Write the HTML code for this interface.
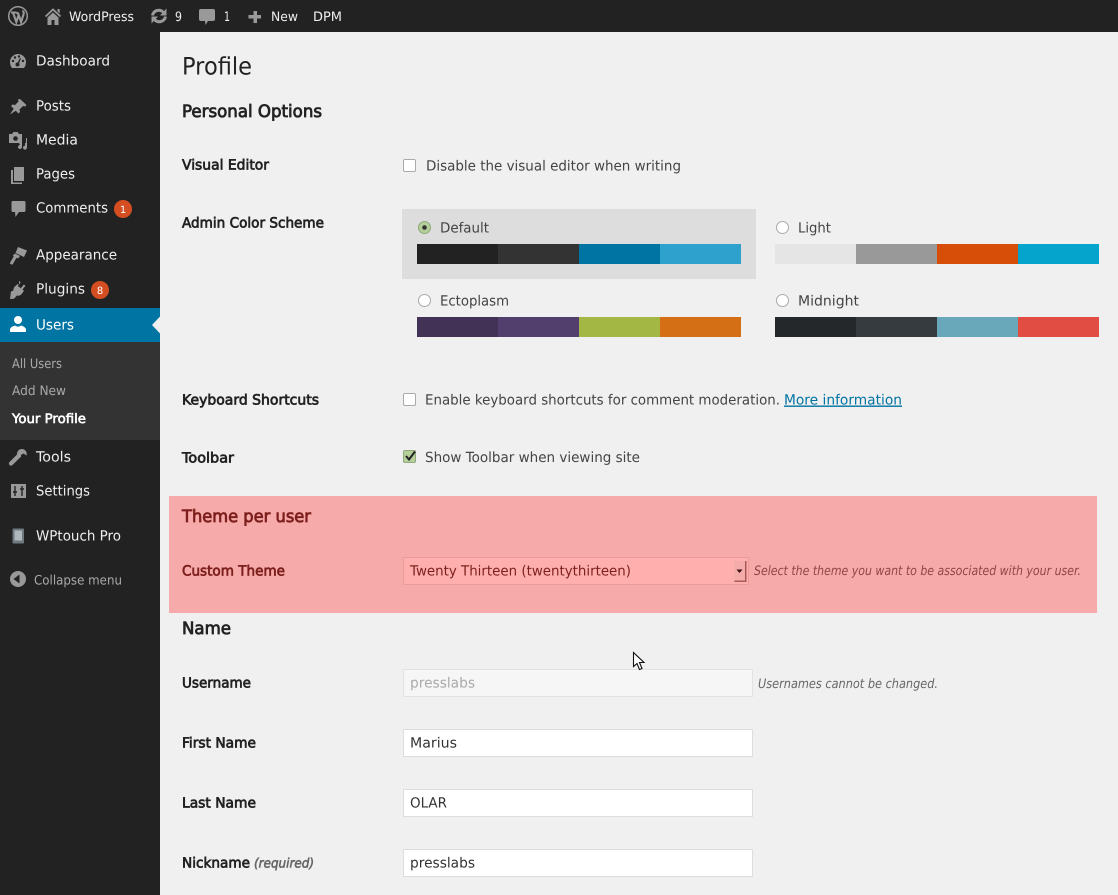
<!DOCTYPE html>
<html lang="en"><head><meta charset="utf-8"><title>Profile</title>
<style>
html,body{margin:0;padding:0;background:#f0f0f0;overflow:hidden}
svg{display:block}
text{font-family:"DejaVu Sans","Liberation Sans",sans-serif;text-rendering:geometricPrecision}
.m{font-size:14px;fill:#eee}
.t{font-size:13px;fill:#eee}
.s{font-size:13px;fill:#aaa}
.l{font-size:14px;fill:#222;stroke:#222;stroke-width:.7px}
.b{font-size:14px;fill:#444}
.h{font-size:17px;fill:#222;stroke:#222;stroke-width:.8px}
.i{fill:#999}
.n{font-size:13px;fill:#666;font-style:italic}
.r{fill:#7d1f1c;stroke:#7d1f1c}
</style></head><body>
<svg xmlns="http://www.w3.org/2000/svg" width="1118" height="895" viewBox="0 0 1118 895">
<rect width="1118" height="895" fill="#f0f0f0"/>
<rect width="160" height="895" fill="#222"/>
<rect width="1118" height="32" fill="#222"/>

<!-- admin bar icons -->
<g fill="none" stroke="#999">
<circle cx="18" cy="16" r="9.300" stroke-width="1.500"/>
<path d="M11 12.500h5.500M13 12.500l3.300 9.500 2.400-7 2.400 7 2.600-8c.5-1.700-.5-2.800-1.500-2.800M16.500 12.500l2.200 1.800" stroke-width="2.100"/>
</g>
<path d="M45.500 16.500l7.500-7 7.500 7" fill="none" stroke="#999" stroke-width="1.800"/>
<path class="i" d="M57.500 9h2.200v4.500l-2.200-2zM47.500 17.500l5.500-5 5.500 5v7.500h-4v-5h-3v5h-4z"/>
<g fill="none" stroke="#999" stroke-width="3">
<path d="M152.500 15.500a6.300 6.300 0 0 1 11-3"/><path d="M165.500 16.500a6.300 6.300 0 0 1-11 3"/>
</g>
<path class="i" d="M166.500 8.500v7h-6.500zM151.500 23.500v-7h6.500z"/>
<path class="i" d="M201 9h12a2 2 0 0 1 2 2v8a2 2 0 0 1-2 2h-5l-2.500 4-.5-4h-4a2 2 0 0 1-2-2v-8a2 2 0 0 1 2-2z"/>
<path class="i" d="M253.500 11h3.500v4h4v3.500h-4v4.500h-3.500v-4.500h-5v-3.500h5z"/>
<text x="69" y="21" class="t" textLength="65" lengthAdjust="spacingAndGlyphs">WordPress</text>
<text x="175" y="21" class="t" textLength="7" lengthAdjust="spacingAndGlyphs">9</text>
<text x="224" y="21" class="t" textLength="6" lengthAdjust="spacingAndGlyphs">1</text>
<text x="271" y="21" class="t" textLength="27" lengthAdjust="spacingAndGlyphs">New</text>
<text x="313" y="21" class="t" textLength="29" lengthAdjust="spacingAndGlyphs">DPM</text>

<!-- sidebar -->
<rect y="308" width="160" height="34" fill="#0074a2"/>
<rect y="342" width="160" height="98" fill="#333"/>
<path d="M160 316.500l-8 8.500 8 8.500z" fill="#f0f0f0"/>

<path class="i" d="M10 62a8 8 0 0 1 16 0c0 2.500-.8 4.500-2 6h-12c-1.200-1.500-2-3.500-2-6z"/>
<g fill="#222"><circle cx="13" cy="61" r="1.200"/><circle cx="15" cy="57.500" r="1.200"/><circle cx="19" cy="56.500" r="1.200"/><circle cx="23" cy="61" r="1.200"/><circle cx="17.500" cy="64.500" r="2"/><path d="M17 64l3-6 1 .5-2.500 6z"/></g>
<path class="i" d="M20 99l6.500 6-1.500 1.500-2-.5-3.500 3.500.5 2.500-1.500 1.500-2.700-2.700-5.800 3.700 3.700-5.800-2.700-2.700 1.500-1.500 2.500.5 3.500-3.500-.5-2z"/>
<path class="i" d="M9 134h3l1.500-2h4l1.500 2h3v9h-13z"/><circle cx="15.500" cy="138.500" r="2.300" fill="#222"/>
<path class="i" d="M19 143h7v-5h1v9.500a2 2 0 1 1-2-1.800v-2.700h-3v3.800a2 2 0 1 1-2-1.800z" fill-rule="evenodd"/>
<path class="i" d="M14 167h10v14h-10z"/><path class="i" d="M11 170h2v12.500h9v1.500h-11z"/>
<path class="i" d="M13 201h11a1.500 1.500 0 0 1 1.500 1.500v8a1.500 1.500 0 0 1-1.500 1.500h-5l-3.500 5-.5-5h-2a1.500 1.500 0 0 1-1.500-1.500v-8a1.500 1.500 0 0 1 1.500-1.500z"/>
<!-- brush -->
<path class="i" d="M18 247l9 3.500-3 6.500-8.500-4zM15 253.500l5 2.500-2 2.500-1.500-.7-3.500 6-1 1-2-1 .3-1.500 3.500-6-1-.7z"/>
<!-- plug -->
<path class="i" d="M19 281l1.800 1.300-3 3.700 3 2.200 3-3.700 1.700 1.300-3 3.700 1.500 1.200-2.500 3.500c-1.500 1.500-3 1.800-4.500 1.300l-3 3.200-4 .3 1-7.500 2.500-1c-.2-1.500.3-3 1.300-4l3-2.500 1.200 1z"/>
<circle cx="18" cy="320" r="4" fill="#fff"/><path d="M10 332v-3c1-2 3-3 5-3.500 2 1.500 4 1.500 6 0 2 .5 4 1.500 5 3.500v3z" fill="#fff"/>
<path class="i" d="M22 449a5 5 0 0 1 4.500 6.500l-3-2-2.500 1.500v2l-1 .5-7.500 7.500a2 2 0 0 1-3-3l7.500-7.500a5 5 0 0 1 5-5.500z"/>
<rect x="11" y="484" width="15" height="14" fill="#999"/><path d="M15 486v10M22 486v10M13 492h4M20 489h4" stroke="#222" stroke-width="1.400"/>
<rect x="12.500" y="528.500" width="11.500" height="15" rx="1" fill="#6f7a80"/><rect x="14.500" y="530.500" width="7.500" height="10" fill="#aeb8bd"/>
<circle cx="18" cy="579" r="8" fill="#999"/><path d="M13.500 579l6-4.500v9z" fill="#222"/>

<text class="m" x="36" y="65.500" textLength="74" lengthAdjust="spacingAndGlyphs">Dashboard</text>
<text class="m" x="36" y="110.500" textLength="35" lengthAdjust="spacingAndGlyphs">Posts</text>
<text class="m" x="36" y="144.500" textLength="42" lengthAdjust="spacingAndGlyphs">Media</text>
<text class="m" x="36" y="178.500" textLength="39" lengthAdjust="spacingAndGlyphs">Pages</text>
<text class="m" x="36" y="212.500" textLength="72" lengthAdjust="spacingAndGlyphs">Comments</text>
<text class="m" x="36" y="259.500" textLength="81" lengthAdjust="spacingAndGlyphs">Appearance</text>
<text class="m" x="36" y="293.500" textLength="49" lengthAdjust="spacingAndGlyphs">Plugins</text>
<text class="m" x="36" y="329.500" textLength="38" lengthAdjust="spacingAndGlyphs" style="fill:#fff">Users</text>
<text class="s" x="12" y="368" textLength="50" lengthAdjust="spacingAndGlyphs">All Users</text>
<text class="s" x="12" y="395" textLength="54" lengthAdjust="spacingAndGlyphs">Add New</text>
<text class="s" x="12" y="423" textLength="74" lengthAdjust="spacingAndGlyphs" style="fill:#fff;stroke:#fff;stroke-width:.6px">Your Profile</text>
<text class="m" x="36" y="461.500" textLength="35" lengthAdjust="spacingAndGlyphs">Tools</text>
<text class="m" x="36" y="495.500" textLength="54" lengthAdjust="spacingAndGlyphs">Settings</text>
<text class="m" x="36" y="540.500" textLength="85" lengthAdjust="spacingAndGlyphs">WPtouch Pro</text>
<text class="s" x="34" y="584.500" textLength="88" lengthAdjust="spacingAndGlyphs">Collapse menu</text>

<circle cx="123" cy="209" r="9" fill="#d54e21"/>
<text x="123" y="213" text-anchor="middle" style="font-size:10px;fill:#fff">1</text>
<circle cx="100" cy="290" r="9" fill="#d54e21"/>
<text x="100" y="294" text-anchor="middle" style="font-size:10px;fill:#fff">8</text>

<!-- pink block -->
<rect x="169" y="496" width="928" height="117" fill="#f6abaa"/>

<!-- headings -->
<text x="182" y="74.500" textLength="70" lengthAdjust="spacingAndGlyphs" style="font-size:24px;fill:#222">Profile</text>
<text class="h" x="182" y="117" textLength="140" lengthAdjust="spacingAndGlyphs">Personal Options</text>
<text class="h r" x="182" y="522" textLength="129" lengthAdjust="spacingAndGlyphs">Theme per user</text>
<text class="h" x="182" y="634" textLength="49" lengthAdjust="spacingAndGlyphs">Name</text>

<!-- labels -->
<text class="l" x="182" y="169.500" textLength="87" lengthAdjust="spacingAndGlyphs">Visual Editor</text>
<text class="l" x="182" y="227.500" textLength="142" lengthAdjust="spacingAndGlyphs">Admin Color Scheme</text>
<text class="l" x="182" y="404.500" textLength="137" lengthAdjust="spacingAndGlyphs">Keyboard Shortcuts</text>
<text class="l" x="182" y="462.500" textLength="52" lengthAdjust="spacingAndGlyphs">Toolbar</text>
<text class="l r" x="182" y="575.500" textLength="103" lengthAdjust="spacingAndGlyphs">Custom Theme</text>
<text class="l" x="182" y="687.500" textLength="69" lengthAdjust="spacingAndGlyphs">Username</text>
<text class="l" x="182" y="747.500" textLength="74" lengthAdjust="spacingAndGlyphs">First Name</text>
<text class="l" x="182" y="807.500" textLength="74" lengthAdjust="spacingAndGlyphs">Last Name</text>
<text class="l" x="182" y="867.500" textLength="68" lengthAdjust="spacingAndGlyphs">Nickname</text>
<text x="254" y="867.500" textLength="60" lengthAdjust="spacingAndGlyphs" style="font-size:13px;fill:#666;stroke:#666;stroke-width:.6px;font-style:italic">(required)</text>

<!-- visual editor -->
<rect x="403.500" y="159.500" width="12" height="12" rx="1.500" fill="#fff" stroke="#aaa"/>
<text class="b" x="426" y="170.500" textLength="255" lengthAdjust="spacingAndGlyphs">Disable the visual editor when writing</text>

<!-- colour schemes -->
<rect x="402" y="209" width="354" height="70" fill="#ddd"/>
<circle cx="424.500" cy="227.500" r="6" fill="#b5cf9b" stroke="#8fa87c"/><circle cx="424.500" cy="227.500" r="2.300" fill="#333"/>
<text class="b" x="440" y="232.500" textLength="49" lengthAdjust="spacingAndGlyphs">Default</text>
<rect x="417" y="244" width="81" height="20" fill="#222"/><rect x="498" y="244" width="81" height="20" fill="#333"/><rect x="579" y="244" width="81" height="20" fill="#0074a2"/><rect x="660" y="244" width="81" height="20" fill="#2ea2cc"/>

<circle cx="782.500" cy="227.500" r="6" fill="#fff" stroke="#aaa"/>
<text class="b" x="798" y="232.500" textLength="33" lengthAdjust="spacingAndGlyphs">Light</text>
<rect x="775" y="244" width="81" height="20" fill="#e5e5e5"/><rect x="856" y="244" width="81" height="20" fill="#999"/><rect x="937" y="244" width="81" height="20" fill="#d64e07"/><rect x="1018" y="244" width="81" height="20" fill="#04a4cc"/>

<circle cx="424.500" cy="300.500" r="6" fill="#fff" stroke="#aaa"/>
<text class="b" x="440" y="305.500" textLength="69" lengthAdjust="spacingAndGlyphs">Ectoplasm</text>
<rect x="417" y="317" width="81" height="20" fill="#413256"/><rect x="498" y="317" width="81" height="20" fill="#523f6d"/><rect x="579" y="317" width="81" height="20" fill="#a3b745"/><rect x="660" y="317" width="81" height="20" fill="#d46f15"/>

<circle cx="782.500" cy="300.500" r="6" fill="#fff" stroke="#aaa"/>
<text class="b" x="798" y="305.500" textLength="61" lengthAdjust="spacingAndGlyphs">Midnight</text>
<rect x="775" y="317" width="81" height="20" fill="#25282b"/><rect x="856" y="317" width="81" height="20" fill="#363b3f"/><rect x="937" y="317" width="81" height="20" fill="#69a8bb"/><rect x="1018" y="317" width="81" height="20" fill="#e14d43"/>

<!-- keyboard shortcuts -->
<rect x="403.500" y="393.500" width="12" height="12" rx="1.500" fill="#fff" stroke="#aaa"/>
<text class="b" x="425" y="404.500" textLength="355" lengthAdjust="spacingAndGlyphs">Enable keyboard shortcuts for comment moderation.</text>
<text class="b" x="784" y="404.500" textLength="118" lengthAdjust="spacingAndGlyphs" style="fill:#0074a2;text-decoration:underline">More information</text>

<!-- toolbar -->
<rect x="403.500" y="450.500" width="12" height="12" rx="1.500" fill="#b5cf9b" stroke="#8fa87c"/>
<path d="M406 456l3 3.500 6-8" fill="none" stroke="#222" stroke-width="2"/>
<text class="b" x="425" y="462" textLength="215" lengthAdjust="spacingAndGlyphs">Show Toolbar when viewing site</text>

<!-- select -->
<rect x="403.500" y="557.500" width="345" height="27" fill="#ffb0ae" stroke="#eb9c9a"/>
<text class="b" x="410" y="575.500" textLength="221" lengthAdjust="spacingAndGlyphs" style="fill:#7d1f1c">Twenty Thirteen (twentythirteen)</text>
<rect x="734" y="561" width="12" height="20" fill="#f4acaa"/>
<path d="M745 561h1.500v21h-12v-1.500h10.500z" fill="#a85a58"/>
<path d="M736.500 569.500h6l-3 3.500z" fill="#3a1110"/>
<text class="n" x="754" y="575" textLength="327" lengthAdjust="spacingAndGlyphs" style="fill:#8f4644">Select the theme you want to be associated with your user.</text>

<!-- inputs -->
<rect x="403.500" y="669.500" width="349" height="27" fill="#f6f6f6" stroke="#e2e2e2"/>
<text class="b" x="410" y="687.500" textLength="65" lengthAdjust="spacingAndGlyphs" style="fill:#aaa">presslabs</text>
<text class="n" x="758" y="688" textLength="180" lengthAdjust="spacingAndGlyphs">Usernames cannot be changed.</text>
<rect x="403.500" y="729.500" width="349" height="27" fill="#fff" stroke="#ddd"/>
<text class="b" x="410" y="747.500" textLength="47" lengthAdjust="spacingAndGlyphs" style="fill:#333">Marius</text>
<rect x="403.500" y="789.500" width="349" height="27" fill="#fff" stroke="#ddd"/>
<text class="b" x="410" y="807.500" textLength="37" lengthAdjust="spacingAndGlyphs" style="fill:#333">OLAR</text>
<rect x="403.500" y="849.500" width="349" height="27" fill="#fff" stroke="#ddd"/>
<text class="b" x="410" y="867.500" textLength="65" lengthAdjust="spacingAndGlyphs" style="fill:#333">presslabs</text>

<!-- cursor -->
<path d="M633.500 652.500v14l3.500-3 2.500 6 2.500-1-2.500-6h4.500z" fill="#fff" stroke="#111" stroke-width="1.100"/>
</svg>
</body></html>
